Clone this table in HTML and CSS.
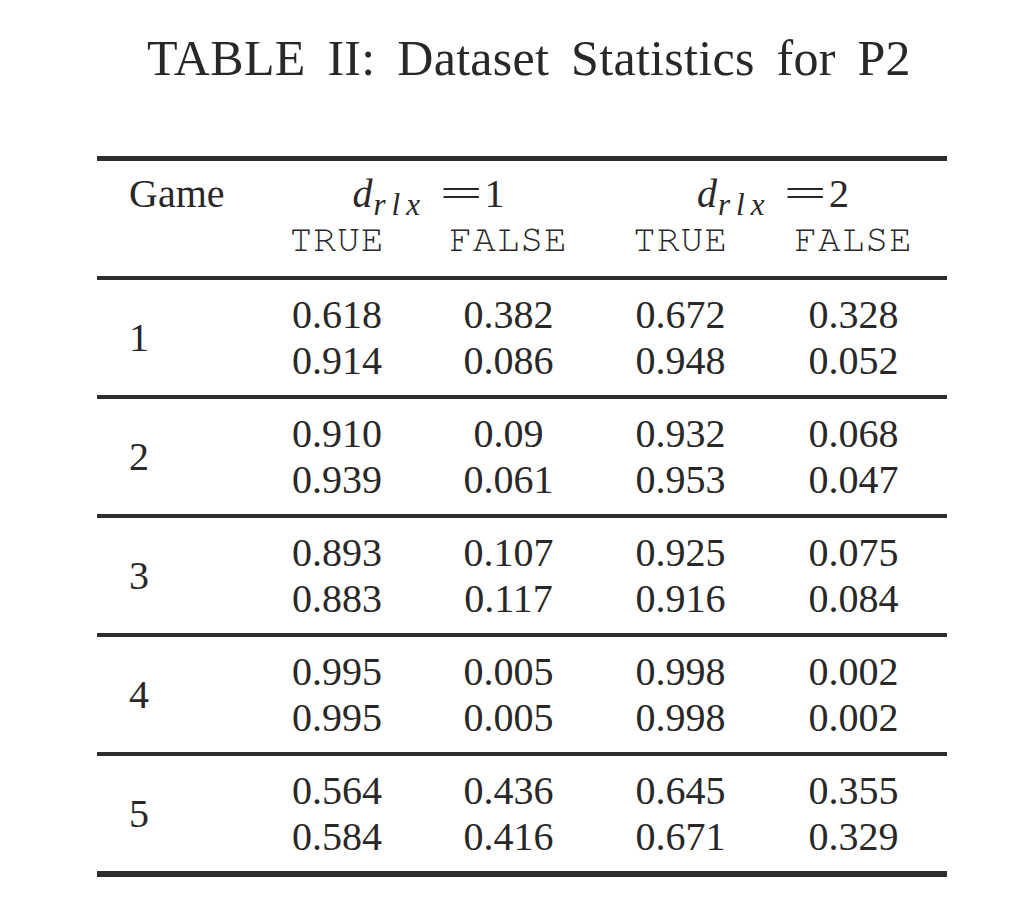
FILE: index.html
```html
<!DOCTYPE html>
<html>
<head>
<meta charset="utf-8">
<link rel="stylesheet" href="styles.css">
</head>
<body>
<div class="page">
  <h1 class="caption">TABLE II: Dataset Statistics for P2</h1>
  <table class="stats">
    <colgroup>
      <col class="c-game"><col class="c-a"><col class="c-b"><col class="c-c"><col class="c-d">
    </colgroup>
    <thead>
      <tr class="h1">
        <th class="game" rowspan="2">Game</th>
        <th class="mh" colspan="2"><span class="math"><i>d</i><sub>rlx</sub><span class="eq">=</span>1</span></th>
        <th class="mh" colspan="2"><span class="math"><i>d</i><sub>rlx</sub><span class="eq">=</span>2</span></th>
      </tr>
      <tr class="h2">
        <th class="tt">TRUE</th><th class="tt">FALSE</th><th class="tt">TRUE</th><th class="tt">FALSE</th>
      </tr>
    </thead>
    <tbody>
      <tr><td class="game">1</td><td>0.618<br>0.914</td><td>0.382<br>0.086</td><td>0.672<br>0.948</td><td>0.328<br>0.052</td></tr>
      <tr><td class="game">2</td><td>0.910<br>0.939</td><td>0.09<br>0.061</td><td>0.932<br>0.953</td><td>0.068<br>0.047</td></tr>
      <tr><td class="game">3</td><td>0.893<br>0.883</td><td>0.107<br>0.117</td><td>0.925<br>0.916</td><td>0.075<br>0.084</td></tr>
      <tr><td class="game">4</td><td>0.995<br>0.995</td><td>0.005<br>0.005</td><td>0.998<br>0.998</td><td>0.002<br>0.002</td></tr>
      <tr><td class="game">5</td><td>0.564<br>0.584</td><td>0.436<br>0.416</td><td>0.645<br>0.671</td><td>0.355<br>0.329</td></tr>
    </tbody>
  </table>
</div>
</body>
</html>
```
FILE: styles.css
```css
html, body {
  margin: 0;
  padding: 0;
  background: #ffffff;
}
.page {
  padding-top: 30px;
  color: #282828;
  font-family: "Liberation Serif", "Times New Roman", serif;
}
.caption {
  margin: 0 0 69px 0;
  padding-left: 147px;
  font-weight: normal;
  font-size: 50px;
  line-height: 57px;
  word-spacing: 9px;
  letter-spacing: 0.3px;
  white-space: nowrap;
}
.stats {
  margin-left: 97px;
  width: 850px;
  border-collapse: collapse;
  table-layout: fixed;
  font-size: 40px;
  line-height: 46px;
  border-top: 5px solid #2e2e2e;
  border-bottom: 6px solid #2e2e2e;
}
.c-game { width: 154px; }
.c-a { width: 172px; }
.c-b { width: 171px; }
.c-c { width: 173px; }
.c-d { width: 180px; }
.stats th {
  font-weight: normal;
  padding: 0;
  text-align: center;
}
.stats th:last-child, .stats td:last-child {
  padding-right: 7px;
}
.stats .h1 th {
  padding-top: 10px;
}
.stats .h2 th {
  padding-bottom: 13px;
}
.stats th.game {
  text-align: left;
  vertical-align: top;
  padding-left: 32px;
  padding-top: 10px;
}
.stats th.mh {
  padding-left: 12px;
}
.stats th.mh:last-child {
  padding-left: 12px;
  padding-right: 7px;
}
.tt {
  font-family: "Nimbus Mono PS", "Nimbus Mono L", "FreeMono", "Courier", "Liberation Mono", monospace;
  font-size: 38px;
  letter-spacing: 0.9px;
}
.math {
  white-space: nowrap;
  font-family: "Liberation Serif", serif;
}
.math i {
  font-style: italic;
}
.math sub {
  font-family: "Liberation Serif", serif;
  font-style: italic;
  font-size: 31px;
  vertical-align: -8px;
  line-height: 0;
  letter-spacing: 6px;
  margin-left: 1px;
}
.eq {
  display: inline-block;
  font-family: "Liberation Serif", serif;
  transform: scaleX(1.9);
  margin: 0 12px 0 24px;
}
.stats tbody tr {
  border-top: 4px solid #2e2e2e;
}
.stats td {
  padding: 12px 0 11px 0;
  text-align: center;
}
.stats td.game {
  text-align: left;
  padding-left: 32px;
  vertical-align: middle;
}
```
